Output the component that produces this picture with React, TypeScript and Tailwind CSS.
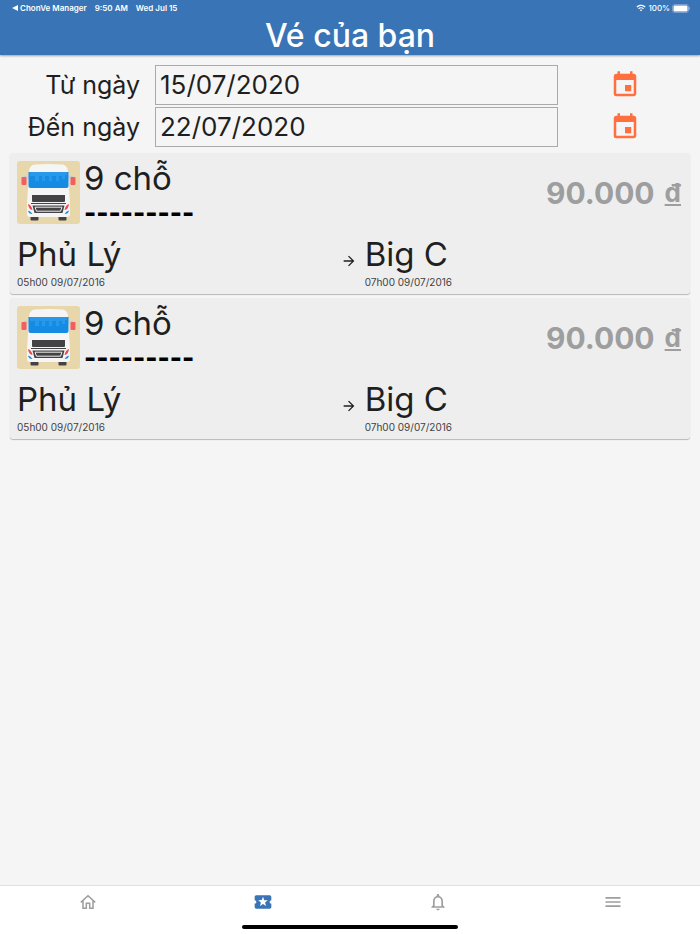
import { useState } from 'react';
import {
  MdArrowForward,
  MdEvent,
  MdLocalActivity,
  MdMenu,
  MdNotificationsNone,
  MdWifi,
} from 'react-icons/md';

const tickets = [
  {
    id: 1,
    seats: '9 chỗ',
    code: '---------',
    price: '90.000',
    from: 'Phủ Lý',
    departAt: '05h00 09/07/2016',
    to: 'Big C',
    arriveAt: '07h00 09/07/2016',
  },
  {
    id: 2,
    seats: '9 chỗ',
    code: '---------',
    price: '90.000',
    from: 'Phủ Lý',
    departAt: '05h00 09/07/2016',
    to: 'Big C',
    arriveAt: '07h00 09/07/2016',
  },
];

const BusIcon = () => (
  <svg viewBox="0 0 63 63" className="size-[63px] shrink-0" aria-hidden="true">
    <rect width="63" height="63" rx="3" fill="#e9d7ac" />
    <path d="M11 18V15.500H7.500V17M52 18V15.500H55.500V17" fill="none" stroke="#c9cdd2" strokeWidth="1.500" />
    <rect x="4.500" y="16" width="5" height="8" rx="1" fill="#ef5f64" />
    <rect x="53.500" y="16" width="5" height="8" rx="1" fill="#ef5f64" />
    <rect x="13.500" y="54" width="8" height="5.500" rx="1" fill="#434345" />
    <rect x="41.500" y="54" width="8" height="5.500" rx="1" fill="#434345" />
    <path
      d="M18 3.500Q31.500 2.500 45 3.500Q50.500 4 51 10L53 43V53Q53 56 50 56H13Q10 56 10 53V43L12 10Q12.500 4 18 3.500Z"
      fill="#f5f5f5"
    />
    <path d="M11.500 11H51.500V25Q51.500 27 49.500 27H13.500Q11.500 27 11.500 25Z" fill="#168be3" />
    <path
      d="M13 11H50V14H48V18H45V15H42V20H39V15H35V20H32V15H28V20H25V15H22V20H18V15H13Z"
      fill="#2799ea"
    />
    <path d="M15 34H48V40Q48 41 47 41H16Q15 41 15 40Z" fill="#434345" />
    <path d="M14 42.500H49" stroke="#434345" strokeWidth="1" />
    <path d="M15.500 44.500H47.500L45.500 52H17.500Z" fill="#434345" />
    <path d="M18 46.200H45L43.500 50.200H19.500Z" fill="#434345" stroke="#f0f0f0" strokeWidth="1" />
    <path
      d="M11 43Q14.500 44 15.500 49Q11.500 48.500 11 43ZM52 43Q48.500 44 47.500 49Q51.500 48.500 52 43Z"
      fill="#ef4a50"
    />
    <path
      d="M11 49.500Q14 50 15.500 53Q11.500 53 11 49.500ZM52 49.500Q49 50 47.500 53Q51.500 53 52 49.500Z"
      fill="#168be3"
    />
  </svg>
);

const HomeIcon = () => (
  <svg
    viewBox="0 0 16 16"
    className="size-4"
    fill="none"
    stroke="currentColor"
    strokeWidth="1.500"
    aria-hidden="true"
  >
    <path d="M0.800 8.400L8 1.800L15.200 8.400M3 6.800V14.200H6.300V9.300H9.700V14.200H13V6.800" />
  </svg>
);

const StatusBar = () => (
  <div className="flex h-4 items-center justify-between pl-3 pr-2.5 text-[8px] font-semibold">
    <div className="flex items-center gap-2">
      <a href="#" className="flex items-center gap-0.5">
        <svg viewBox="0 0 6 6" className="size-1.5" fill="currentColor" aria-hidden="true">
          <path d="M0 3L6 0V6Z" />
        </svg>
        ChonVe Manager
      </a>
      <span>9:50 AM</span>
      <span>Wed Jul 15</span>
    </div>
    <div className="flex items-center gap-0.5 font-medium">
      <MdWifi className="size-2.5" />
      <span>100%</span>
      <svg viewBox="0 0 18 9" className="h-[9px] w-[18px]" aria-hidden="true">
        <rect x="0.500" y="0.500" width="16" height="8" rx="2" fill="none" stroke="#fff" strokeOpacity="0.300" />
        <rect x="1.500" y="1.500" width="14" height="6" rx="1.200" fill="#fff" />
        <path d="M17.200 3.200V5.800" stroke="#fff" strokeOpacity="0.500" />
      </svg>
    </div>
  </div>
);

type DateRowProps = {
  id: string;
  label: string;
  value: string;
  onChange: (value: string) => void;
};

const DateRow = ({ id, label, value, onChange }: DateRowProps) => (
  <div className="grid grid-cols-[140px_1fr_134px] items-center pr-2">
    <label htmlFor={id} className="text-right text-[25px] leading-8">
      {label}
    </label>
    <input
      id={id}
      type="text"
      value={value}
      onChange={(e) => onChange(e.target.value)}
      className="ml-[15px] h-10 min-w-0 border border-[#a9abab] bg-transparent px-1 pb-0.5 text-[26px] outline-none"
    />
    <button type="button" aria-label={`Chọn ${label.toLowerCase()}`} className="justify-self-center text-[#ff6f3f]">
      <MdEvent className="size-[30px]" />
    </button>
  </div>
);

const TicketCard = ({ ticket }: { ticket: (typeof tickets)[number] }) => (
  <article className="rounded-[3px] bg-[#eeeeee] px-[7px] pb-[5px] pt-2 shadow-[0_1px_1px_rgba(0,0,0,0.25)]">
    <div className="flex items-start gap-1">
      <BusIcon />
      <div className="flex-1">
        <h2 className="text-[33px] leading-[34px]">{ticket.seats}</h2>
        <p className="text-[26px] font-extrabold leading-9 text-black">{ticket.code}</p>
      </div>
      <p className="flex items-center gap-2.5 pr-0.5 pt-3 text-[30px] font-bold leading-10 text-[#9e9e9e]">
        {ticket.price}
        <span className="text-[26px] underline decoration-2 underline-offset-2">đ</span>
      </p>
    </div>
    <div className="mt-0.5 flex items-start">
      <div className="flex flex-1 items-center justify-between">
        <div>
          <p className="text-[33px] leading-[42px]">{ticket.from}</p>
          <p className="text-[10px] leading-[14px] text-[#424242]">{ticket.departAt}</p>
        </div>
        <MdArrowForward className="size-4" />
      </div>
      <div className="w-[49%] pl-2">
        <p className="text-[33px] leading-[42px]">{ticket.to}</p>
        <p className="text-[10px] leading-[14px] text-[#424242]">{ticket.arriveAt}</p>
      </div>
    </div>
  </article>
);

const tabs = [
  { name: 'Trang chủ', icon: <HomeIcon /> },
  { name: 'Vé', icon: <MdLocalActivity className="size-5" /> },
  { name: 'Thông báo', icon: <MdNotificationsNone className="size-5" /> },
  { name: 'Menu', icon: <MdMenu className="size-5" /> },
];

const TabBar = () => {
  const [active, setActive] = useState('Vé');

  return (
    <nav className="border-t border-[#e0e0e0] bg-white">
      <div className="grid grid-cols-4">
        {tabs.map((tab) => (
          <button
            key={tab.name}
            type="button"
            aria-label={tab.name}
            onClick={() => setActive(tab.name)}
            className={`flex h-8 items-center justify-center ${active === tab.name ? 'text-[#3874b6]' : 'text-[#9e9e9e]'}`}
          >
            {tab.icon}
          </button>
        ))}
      </div>
      <div className="mx-auto mb-[5px] mt-[7px] h-1 w-[216px] rounded-full bg-black" />
    </nav>
  );
};

export default function App() {
  const [fromDate, setFromDate] = useState('15/07/2020');
  const [toDate, setToDate] = useState('22/07/2020');

  return (
    <div className="flex min-h-screen flex-col bg-[#f5f5f5] font-[Inter,sans-serif] text-[#1f1f1f]">
      <header className="bg-[#3874b6] text-white shadow-[0_1px_2px_rgba(0,0,0,0.35)]">
        <StatusBar />
        <h1 className="h-[39px] text-center text-[32px] font-medium leading-10">Vé của bạn</h1>
      </header>
      <main className="flex-1">
        <section className="space-y-0.5 pt-2.5">
          <DateRow id="from-date" label="Từ ngày" value={fromDate} onChange={setFromDate} />
          <DateRow id="to-date" label="Đến ngày" value={toDate} onChange={setToDate} />
        </section>
        <section className="space-y-1 px-2.5 pt-1.5">
          {tickets.map((ticket) => (
            <TicketCard key={ticket.id} ticket={ticket} />
          ))}
        </section>
      </main>
      <TabBar />
    </div>
  );
}
